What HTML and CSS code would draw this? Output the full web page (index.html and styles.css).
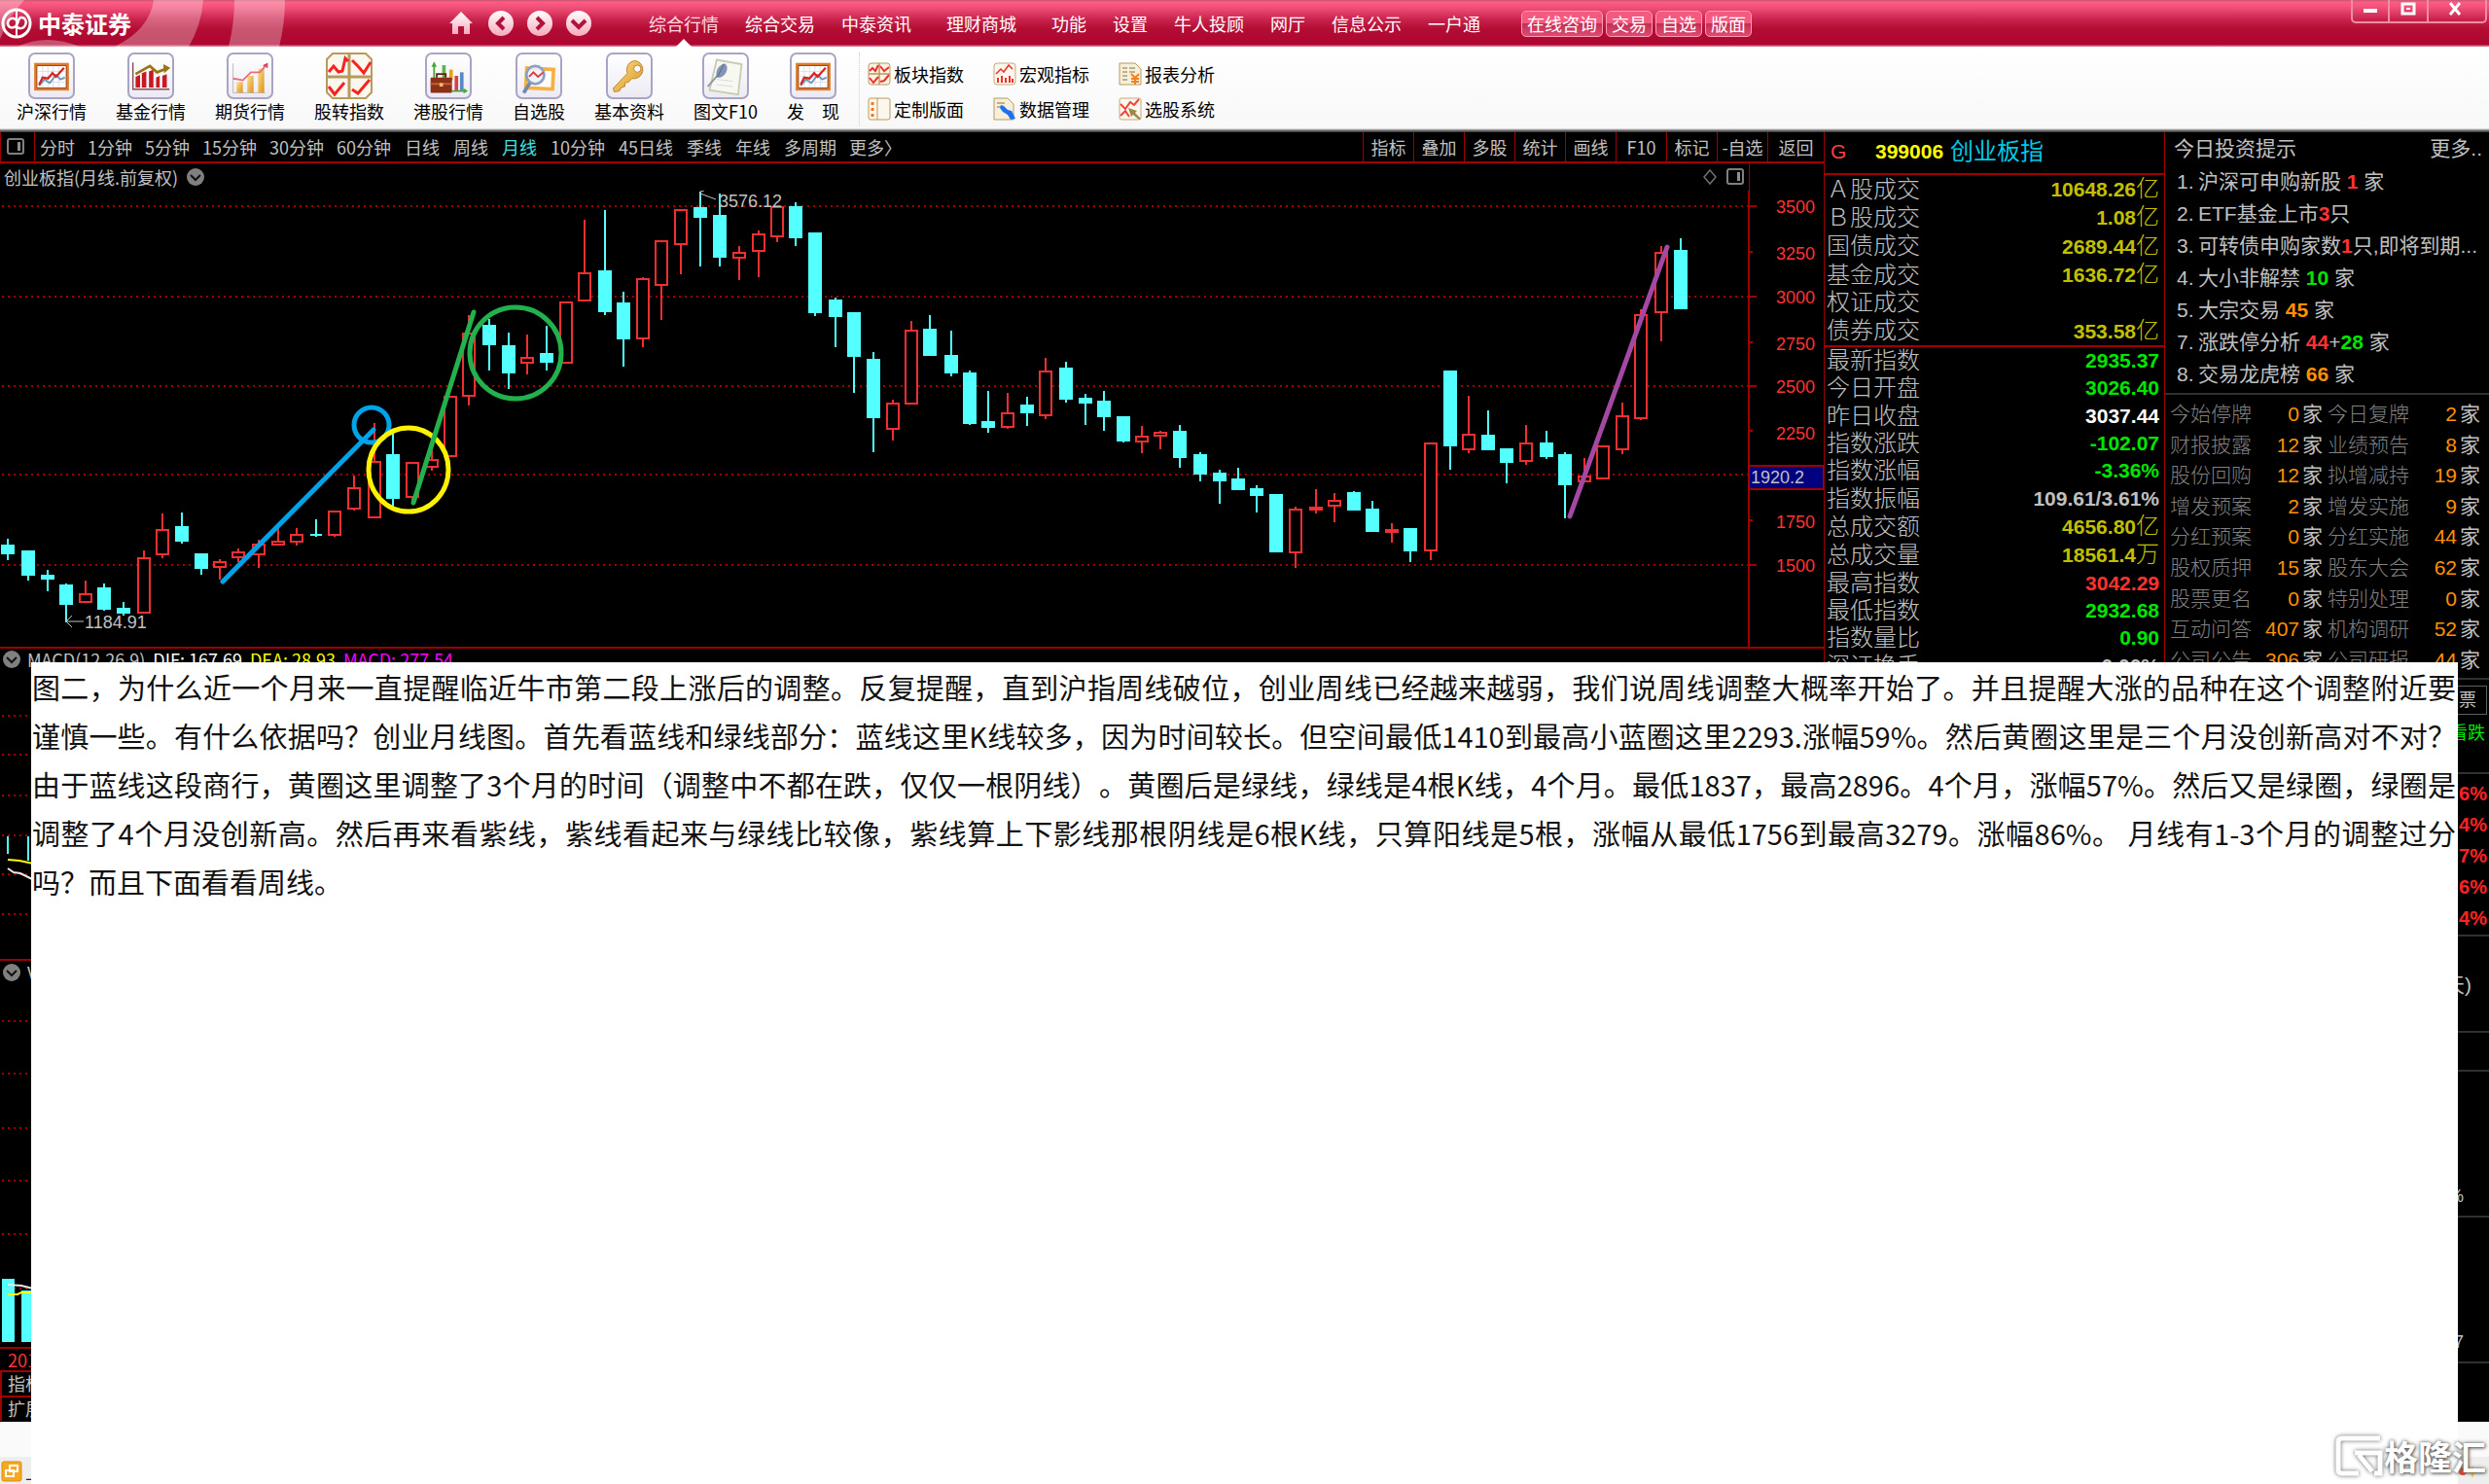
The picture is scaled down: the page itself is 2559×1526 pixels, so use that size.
FILE: index.html
```html
<!DOCTYPE html>
<html lang="zh-CN">
<head>
<meta charset="utf-8">
<title>中泰证券</title>
<link rel="stylesheet" href="styles.css">
</head>
<body>
<svg class="defs" width="0" height="0" aria-hidden="true">
  <defs>
    <linearGradient id="gold" x1="0" y1="0" x2="1" y2="1"><stop offset="0" stop-color="#ffe08a"/><stop offset="1" stop-color="#d9921c"/></linearGradient>
    <linearGradient id="pink" x1="0" y1="0" x2="0" y2="1"><stop offset="0" stop-color="#fff"/><stop offset="1" stop-color="#f8a9bd"/></linearGradient>
    <symbol id="i-board" viewBox="0 0 48 48">
      <rect x="6" y="11" width="36" height="28" fill="#fff" stroke="#e07b28" stroke-width="3"/>
      <path d="M7.500 12.500h33v25h-33z" fill="none" stroke="#8a3a12" stroke-width="1"/>
      <path d="M14 13v24M20 13v24M26 13v24M32 13v24M9 19h30M9 25h30M9 31h30" stroke="#dcdce6"/>
      <path d="M10 35l6-7 6 4 7-9 5 5 5-2" fill="none" stroke="#6d98b5" stroke-width="2"/>
      <path d="M10 34l4-8 6 1 5-6 4 4 9-10" fill="none" stroke="#d82424" stroke-width="2.500"/>
    </symbol>
    <symbol id="i-fund" viewBox="0 0 48 48">
      <path d="M4 9v30h41" fill="none" stroke="#8a4a50" stroke-width="1.500"/>
      <path d="M7 37V25l5-2v14zM14 37V21l5-2v18zM22 37V19l5-2v20zM30 37V26l4-2v13zM37 37V24l5-2v15z" fill="#c9181f"/>
      <path d="M7 22l16-9 8 7 10-4" fill="none" stroke="#9a7412" stroke-width="3"/><path d="M38 11l8 4-7 6z" fill="#9a7412"/>
    </symbol>
    <symbol id="i-futures" viewBox="0 0 48 48">
      <path d="M5 10v33h36" fill="none" stroke="#b7b7c4"/>
      <rect x="9" y="31" width="7" height="12" fill="url(#gold)"/><rect x="21" y="24" width="7" height="19" fill="url(#gold)"/><rect x="33" y="16" width="7" height="27" fill="url(#gold)"/>
      <path d="M5 27l6 1 5 1 9-9 10 0 7-8" fill="none" stroke="#ec6b7b" stroke-width="2"/><path d="M39 13l4-2 0 4" fill="none" stroke="#dc4256" stroke-width="2"/>
    </symbol>
    <symbol id="i-quad" viewBox="0 0 48 48">
      <path d="M7 1h34l6 6v34l-6 6H7l-6-6V7z" fill="#fbf7ec" stroke="#b79a5e" stroke-width="2"/>
      <path d="M24 1v46M1 25h46" stroke="#b79a5e" stroke-width="3"/>
      <path d="M3 20l5-6 5 6 4-1 3-13 3 3M27 8l6 6 6 7 7-11M3 35l6 8 10-12M27 38l6 4 12-14" fill="none" stroke="#f52222" stroke-width="3"/>
    </symbol>
    <symbol id="i-hk" viewBox="0 0 48 48">
      <path d="M8 28V10" stroke="#48a838" stroke-width="2"/><path d="M8 8l3 6H5z" fill="#48a838"/>
      <rect x="17" y="12" width="4" height="16" fill="#58b848"/><rect x="25" y="17" width="4" height="12" fill="#e8a018"/>
      <rect x="31" y="24" width="4" height="17" fill="#d84048"/><rect x="37" y="20" width="4" height="21" fill="#5888c8"/>
      <path d="M28 41h14" stroke="#48a838" stroke-width="2"/><path d="M46 41l-5-3v6z" fill="#48a838"/>
      <rect x="4" y="26" width="24" height="17" rx="1" fill="#8c3018"/><path d="M11 26v-4h10v4" fill="none" stroke="#6a2010" stroke-width="2"/><path d="M4 33h24" stroke="#c0603a" stroke-width="2"/><rect x="14" y="32" width="4" height="4" fill="#f0c060"/>
    </symbol>
    <symbol id="i-pick" viewBox="0 0 48 48">
      <rect x="8" y="14" width="34" height="26" fill="#f5b040" transform="rotate(3 24 26)"/><rect x="12" y="18" width="26" height="18" fill="#fff" transform="rotate(3 24 26)"/>
      <circle cx="20" cy="23" r="10" fill="#eef3fb" fill-opacity=".9" stroke="#8aa0c4" stroke-width="3"/>
      <path d="M13 25l5-5 5 5 6-5" fill="none" stroke="#e03838" stroke-width="2"/><path d="M14 32l-7 11" stroke="#7088b0" stroke-width="4"/>
    </symbol>
    <symbol id="i-key" viewBox="0 0 48 48">
      <path fill-rule="evenodd" d="M31 7a10 10 0 0 0-9 14L6 38l1 4 6-1 2-4 4-1 0-4 4-1 4-4A10 10 0 1 0 31 7zm2 5a4 4 0 1 1 0 8 4 4 0 0 1 0-8z" fill="url(#gold)" stroke="#b98224"/>
    </symbol>
    <symbol id="i-note" viewBox="0 0 48 48">
      <path d="M14 6l28 5-4 34-32-5z" fill="#f7f8f0" stroke="#c8ccb4" stroke-width="2"/><path d="M14 28l18 2M14 34l18 2" stroke="#d8d8e0"/>
      <path d="M4 36L18 20" stroke="#8a94a4" stroke-width="2"/><path d="M14 26c-2-8 2-14 9-16 5 3 3 13-5 16z" fill="#8494b4"/><path d="M15 25l7-14" stroke="#526080"/>
    </symbol>
    <symbol id="s-quad" viewBox="0 0 24 24"><rect x="1" y="1" width="22" height="22" rx="3" fill="#f9f3e3" stroke="#b79a5e"/><path d="M12 1v22M1 12h22" stroke="#b79a5e" stroke-width="1.500"/><path d="M2 9l3-3 3 3 3-6M13 4l4 5 5-4M2 16l4 5 5-6M13 20l4-1 5-6" fill="none" stroke="#f03030" stroke-width="2"/></symbol>
    <symbol id="s-macro" viewBox="0 0 24 24"><rect x="1" y="1" width="22" height="22" rx="3" fill="#f9f6ec" stroke="#c4ab7c"/><path d="M3 12l5-5 3 3 5-7 4 4" fill="none" stroke="#f03030" stroke-width="1.500"/><path d="M5 21v-5M9 21v-7M13 21v-5M17 21v-7M20 21v-4" stroke="#f03030" stroke-width="2"/></symbol>
    <symbol id="s-report" viewBox="0 0 24 24"><path d="M1 1h16l6 6v16H1z" fill="#f6efdc" stroke="#b79a5e"/><path d="M4 6h5M4 10h5M4 14h5M4 18h5M11 6h6M11 10h6" stroke="#b09a6c" stroke-width="1.500"/><path d="M13 12l4 4 4-4M17 16v7M13 17h8M13 20h8" fill="none" stroke="#f08020" stroke-width="2"/></symbol>
    <symbol id="s-layout" viewBox="0 0 24 24"><rect x="1" y="1" width="22" height="22" rx="2" fill="#fbf7ec" stroke="#b79a5e"/><path d="M10 1v22" stroke="#b79a5e"/><path d="M5 5v3M5 11v3M5 17v3" stroke="#f07820" stroke-width="3"/></symbol>
    <symbol id="s-data" viewBox="0 0 24 24"><path d="M1 1h14l6 6v16H1z" fill="#f6efdc" stroke="#b79a5e"/><path d="M4 6h8M4 10h6" stroke="#b09a6c" stroke-width="1.500"/><path d="M8 8l3 1 4 4 4 1 4 8-5 1-3-5-5-3-3-4z" fill="#1a72f0"/></symbol>
    <symbol id="s-select" viewBox="0 0 24 24"><rect x="1" y="1" width="22" height="22" rx="2" fill="#fbf7ec" stroke="#c4ab7c"/><path d="M2 7l5 5 5-7 4 3 5-6M2 19l5-5 4 6" fill="none" stroke="#f04040" stroke-width="2"/><path d="M10 11l9 3-2 2 6 6-2 1-6-5-2 2z" fill="#a08848"/></symbol>
    <symbol id="i-fold" viewBox="0 0 20 20"><circle cx="10" cy="10" r="9" fill="#808080"/><path d="M5 8l5 5 5-5" fill="none" stroke="#111" stroke-width="2"/></symbol>
    <symbol id="i-panel" viewBox="0 0 20 20"><rect x="2" y="2" width="16" height="15" rx="2" fill="none" stroke="#808080" stroke-width="2"/><path d="M12 5h3v9h-3z" fill="#909090"/></symbol>
  </defs>
</svg>

<header class="titlebar">
  <svg class="swoosh" viewBox="0 0 300 48" aria-hidden="true"><g fill="#fff" fill-opacity=".3"><path d="M0 0H25Q8 18 2 36L0 40z"/><path d="M158 0h51q-2 26-15 48h-76q36-18 40-48z"/><path d="M241 0h52q0 24-6 48h-52q6-24 6-48z"/><path d="M18 48q30-14 64 0z"/></g></svg>
  <div class="brand">
    <svg width="32" height="32" viewBox="0 0 32 32" aria-hidden="true"><g fill="none" stroke="#fff"><circle cx="16" cy="16" r="14" stroke-width="3"/><path d="M16 3v26" stroke-width="2"/><path d="M16 13c-3-4-9-2-9 3s6 6 9 2 1-8 5-8 6 4 4 8-7 4-9 1" stroke-width="2.500"/></g></svg>
    <span class="brand-name">中泰证券</span>
  </div>
  <div class="quick">
    <button aria-label="首页"><svg width="26" height="26" viewBox="0 0 26 26"><path d="M13 1l12 12h-3v11h-6v-8h-6v8H4V13H1z" fill="url(#pink)"/></svg></button>
    <button aria-label="后退"><svg width="28" height="28" viewBox="0 0 28 28"><circle cx="14" cy="14" r="13" fill="url(#pink)"/><path d="M17 8l-6 6 6 6" fill="none" stroke="#b0123c" stroke-width="4"/></svg></button>
    <button aria-label="前进"><svg width="28" height="28" viewBox="0 0 28 28"><circle cx="14" cy="14" r="13" fill="url(#pink)"/><path d="M11 8l6 6-6 6" fill="none" stroke="#b0123c" stroke-width="4"/></svg></button>
    <button aria-label="展开"><svg width="28" height="28" viewBox="0 0 28 28"><circle cx="14" cy="14" r="13" fill="url(#pink)"/><path d="M7 11l7 7 7-7" fill="none" stroke="#b0123c" stroke-width="4"/></svg></button>
  </div>
  <nav class="menu">
    <a class="active" href="#">综合行情</a><a href="#">综合交易</a><a href="#">中泰资讯</a><a class="wide" href="#">理财商城</a><a href="#">功能</a><a href="#">设置</a><a href="#">牛人投顾</a><a href="#">网厅</a><a href="#">信息公示</a><a href="#">一户通</a>
  </nav>
  <div class="pills"><button>在线咨询</button><button>交易</button><button>自选</button><button>版面</button></div>
  <div class="window">
    <button aria-label="最小化"><svg width="16" height="16" viewBox="0 0 16 16"><path d="M1 8h14v4H1z" fill="#fff"/></svg></button>
    <button aria-label="还原"><svg width="16" height="16" viewBox="0 0 16 16"><path d="M2 3h12v10H2z" fill="none" stroke="#fff" stroke-width="3"/><path d="M6 7h4v2H6z" fill="#fff"/></svg></button>
    <button class="close" aria-label="关闭"><svg width="16" height="16" viewBox="0 0 16 16"><path d="M3 2l10 12M13 2L3 14" stroke="#fff" stroke-width="3"/></svg></button>
  </div>
</header>

<div class="toolbar">
  <div class="tools">
    <button><svg class="framed"><use href="#i-board"/></svg>沪深行情</button>
    <button><svg class="framed"><use href="#i-fund"/></svg>基金行情</button>
    <button><svg class="framed"><use href="#i-futures"/></svg>期货行情</button>
    <button><svg class="plain"><use href="#i-quad"/></svg>股转指数</button>
    <button><svg class="framed"><use href="#i-hk"/></svg>港股行情</button>
    <button><svg class="framed"><use href="#i-pick"/></svg>自选股</button>
    <button><svg class="framed"><use href="#i-key"/></svg>基本资料</button>
    <button><svg class="framed"><use href="#i-note"/></svg>图文F10</button>
    <button><svg class="framed"><use href="#i-board"/></svg>发　现</button>
  </div>
  <div class="small-tools">
    <button><svg><use href="#s-quad"/></svg>板块指数</button>
    <button><svg><use href="#s-macro"/></svg>宏观指标</button>
    <button><svg><use href="#s-report"/></svg>报表分析</button>
    <button><svg><use href="#s-layout"/></svg>定制版面</button>
    <button><svg><use href="#s-data"/></svg>数据管理</button>
    <button><svg><use href="#s-select"/></svg>选股系统</button>
  </div>
</div>

<main class="workspace">
  <section class="charts">
    <div class="period-bar">
      <button class="dock" aria-label="侧栏"><svg width="20" height="20"><use href="#i-panel"/></svg></button>
      <div class="periods">
        <button>分时</button><button class="minute">1分钟</button><button class="minute">5分钟</button><button class="minute">15分钟</button><button class="minute">30分钟</button><button class="minute">60分钟</button><button>日线</button><button>周线</button><button class="active">月线</button><button>10分钟</button><button>45日线</button><button>季线</button><button>年线</button><button>多周期</button><button class="minute">更多〉</button>
      </div>
      <div class="actions"><button>指标</button><button>叠加</button><button>多股</button><button>统计</button><button>画线</button><button>F10</button><button>标记</button><button>-自选</button><button>返回</button></div>
    </div>
    <div class="chart-head">
      <div class="chart-title">
        <span>创业板指(月线.前复权)</span>
        <svg width="20" height="20"><use href="#i-fold"/></svg>
        <svg class="push" width="16" height="20" viewBox="0 0 16 20"><path d="M8 3l6 7-6 7-6-7z" fill="none" stroke="#707070" stroke-width="1.500"/></svg>
        <svg width="20" height="20"><use href="#i-panel"/></svg>
      </div>
    </div>
    <svg class="kline" viewBox="0 196 1875 469" role="img" aria-label="创业板指月线">
      <g class="grid"><path d="M2 212H1798M2 305H1798M2 397H1798M2 488H1798M2 581H1798"/></g>
      <g id="candles"></g>
      <g class="axis">
        <path d="M1798 196V665M1798 212h8M1798 259h4M1798 305h8M1798 352h4M1798 397h8M1798 443h4M1798 488h8M1798 535h4M1798 581h8"/>
        <rect x="1798" y="479" width="77" height="24"/>
      </g>
      <g class="scale"><text x="1866" y="219">3500</text><text x="1866" y="267">3250</text><text x="1866" y="312">3000</text><text x="1866" y="360">2750</text><text x="1866" y="404">2500</text><text x="1866" y="452">2250</text><text x="1866" y="543">1750</text><text x="1866" y="588">1500</text></g>
      <text class="cursor" x="1800" y="497">1920.2</text>
      <g class="peak"><path d="M720 206v-9l4-1M720 199l16 6M68 639h18M74 633l-6 6 6 6"/><text x="739" y="213">3576.12</text><text x="87" y="646">1184.91</text></g>
      <g class="marks">
        <path d="M229 598L384 442" stroke="#00a2e8"/><circle cx="382" cy="437" r="18" stroke="#00a2e8"/>
        <ellipse cx="420" cy="483" rx="41" ry="43" stroke="#fff200"/>
        <path d="M425 517L487 321" stroke="#22b14c"/><ellipse cx="530" cy="363" rx="47" ry="47" stroke="#22b14c"/>
        <path d="M1614 531L1714 254" stroke="#a349a4"/>
      </g>
    </svg>
    <div class="macd-head"><svg width="20" height="20"><use href="#i-fold"/></svg><span>MACD(12,26,9)</span><span class="dif">DIF: 167.69</span><span class="dea">DEA: 28.93</span><span class="macd">MACD: 277.54</span></div>
    <svg class="sub" width="100%" height="294" aria-hidden="true">
      <g class="grid"><path d="M2 44h1800M2 84h1800M2 126h1800M2 167h1800M2 207h1800M2 248h1800"/></g>
      <path d="M8 168v18M29 168v25" stroke="#54ffff" stroke-width="2"/><path d="M8 192l12 1 14 3" stroke="#ffff00" stroke-width="2" fill="none"/><path d="M8 201l6 4 7 1 12 6" stroke="#e8e8e8" stroke-width="2" fill="none"/>
    </svg>
    <div class="volume-head"><svg width="20" height="20"><use href="#i-fold"/></svg><span>V</span></div>
    <svg class="sub" width="100%" height="369" aria-hidden="true">
      <g class="grid"><path d="M2 34h1800M2 88h1800M2 144h1800M2 198h1800M2 253h1800M2 309h1800"/></g>
      <path d="M2 299h13v65H2zM22 311h14v53H22z" fill="#54ffff"/><path d="M8 305l14 1 12 3" stroke="#e8e8e8" stroke-width="2" fill="none"/><path d="M8 315h10l4-2h12" stroke="#ffff00" stroke-width="2" fill="none"/>
    </svg>
    <div class="dates">201</div>
    <div class="foot-tab">指标</div>
    <div class="foot-tab">扩展</div>
  </section>

  <section class="quote">
    <h2><span class="flag">G</span><span class="code">399006</span><span class="name">创业板指</span></h2>
    <table class="turnover">
      <tr><th>Ａ股成交</th><td class="y">10648.26<i>亿</i></td></tr>
      <tr><th>Ｂ股成交</th><td class="y">1.08<i>亿</i></td></tr>
      <tr><th>国债成交</th><td class="y">2689.44<i>亿</i></td></tr>
      <tr><th>基金成交</th><td class="y">1636.72<i>亿</i></td></tr>
      <tr><th>权证成交</th><td></td></tr>
      <tr><th>债券成交</th><td class="y">353.58<i>亿</i></td></tr>
    </table>
    <table class="figures">
      <tr><th>最新指数</th><td class="g">2935.37</td></tr>
      <tr><th>今日开盘</th><td class="g">3026.40</td></tr>
      <tr><th>昨日收盘</th><td class="w">3037.44</td></tr>
      <tr><th>指数涨跌</th><td class="g">-102.07</td></tr>
      <tr><th>指数涨幅</th><td class="g">-3.36%</td></tr>
      <tr><th>指数振幅</th><td>109.61/3.61%</td></tr>
      <tr><th>总成交额</th><td class="y">4656.80<i>亿</i></td></tr>
      <tr><th>总成交量</th><td class="y">18561.4<i>万</i></td></tr>
      <tr><th>最高指数</th><td class="r">3042.29</td></tr>
      <tr><th>最低指数</th><td class="g">2932.68</td></tr>
      <tr><th>指数量比</th><td class="g">0.90</td></tr>
      <tr><th>深证换手</th><td>0.00%</td></tr>
    </table>
  </section>

  <aside class="tips">
    <div class="tips-head"><h3>今日投资提示</h3><a href="#">更多..</a></div>
    <ul>
      <li><span>1.</span>沪深可申购新股 <b class="r">1</b> 家</li>
      <li><span>2.</span>ETF基金上市<b class="r">3</b>只</li>
      <li><span>3.</span>可转债申购家数<b class="r">1</b>只,即将到期...</li>
      <li><span>4.</span>大小非解禁 <b class="g">10</b> 家</li>
      <li><span>5.</span>大宗交易 <b class="o">45</b> 家</li>
      <li><span>7.</span>涨跌停分析 <b class="r">44</b>+<b class="g">28</b> 家</li>
      <li><span>8.</span>交易龙虎榜 <b class="o">66</b> 家</li>
    </ul>
    <table class="events">
      <tr><th>今始停牌</th><td>0<i>家</i></td><th>今日复牌</th><td>2<i>家</i></td></tr>
      <tr><th>财报披露</th><td>12<i>家</i></td><th>业绩预告</th><td>8<i>家</i></td></tr>
      <tr><th>股份回购</th><td>12<i>家</i></td><th>拟增减持</th><td>19<i>家</i></td></tr>
      <tr><th>增发预案</th><td>2<i>家</i></td><th>增发实施</th><td>9<i>家</i></td></tr>
      <tr><th>分红预案</th><td>0<i>家</i></td><th>分红实施</th><td>44<i>家</i></td></tr>
      <tr><th>股权质押</th><td>15<i>家</i></td><th>股东大会</th><td>62<i>家</i></td></tr>
      <tr><th>股票更名</th><td>0<i>家</i></td><th>特别处理</th><td>0<i>家</i></td></tr>
      <tr><th>互动问答</th><td>407<i>家</i></td><th>机构调研</th><td>52<i>家</i></td></tr>
      <tr><th>公司公告</th><td>306<i>家</i></td><th>公司研报</th><td>44<i>家</i></td></tr>
    </table>
    <div class="vote"><span class="vote-box">票</span><span class="vote-side g">看跌</span></div>
    <div class="gains"><b>6%</b><b>4%</b><b>7%</b><b>6%</b><b>4%</b></div>
    <div class="blk days">天)</div>
    <div class="blk gap"></div>
    <div class="blk rate">%</div>
    <div class="blk seven">7</div>
  </aside>
</main>

<footer class="status">
  <div class="status-row">
    <svg width="22" height="22" viewBox="0 0 22 22" aria-hidden="true"><rect x="1" y="1" width="20" height="20" rx="2" fill="#f7a823" stroke="#e08a10"/><path d="M9 5h8v6H9zM5 10h8v6H5z" fill="#f7a823" stroke="#fff" stroke-width="2"/></svg>
    <span>上证</span>
    <svg class="push" width="32" height="24" viewBox="0 0 32 24" aria-hidden="true"><circle cx="5" cy="12" r="4" fill="#e84020"/><path d="M15 6l2 5 5 1-5 2-2 5-2-5-5-2 5-1z" fill="#f8c820"/></svg>
  </div>
</footer>

<article class="note"><p>图二，为什么近一个月来一直提醒临近牛市第二段上涨后的调整。反复提醒，直到沪指周线破位，创业周线已经越来越弱，我们说周线调整大概率开始了。并且提醒大涨的品种在这个调整附近要谨慎一些。有什么依据吗？创业月线图。首先看蓝线和绿线部分：蓝线这里K线较多，因为时间较长。但空间最低1410到最高小蓝圈这里2293.涨幅59%。然后黄圈这里是三个月没创新高对不对？由于蓝线这段商行，黄圈这里调整了3个月的时间（调整中不都在跌，仅仅一根阴线）。黄圈后是绿线，绿线是4根K线，4个月。最低1837，最高2896。4个月，涨幅57%。然后又是绿圈，绿圈是调整了4个月没创新高。然后再来看紫线，紫线看起来与绿线比较像，紫线算上下影线那根阴线是6根K线，只算阳线是5根，涨幅从最低1756到最高3279。涨幅86%。 月线有1-3个月的调整过分吗？而且下面看看周线。</p></article>
<div class="watermark">
  <svg width="52" height="46" viewBox="0 0 52 46" aria-hidden="true"><path d="M48 5H9q-4 0-4 4v28q0 4 4 4h17M22 20h26v21h-6M26 22l14 17" fill="none" stroke="#fff" stroke-width="5"/></svg>
  <span>格隆汇</span>
</div>
<script src="chart.js"></script>
</body>
</html>
```
FILE: styles.css
```css
* { box-sizing: border-box; }
html { height: 100%; }
body {
  margin: 0;
  min-height: 100%;
  position: relative;
  display: flex;
  flex-direction: column;
  overflow-x: hidden;
  background: #000;
  color: #c0c0c0;
  font: 18px/24px "Noto Sans CJK SC", "Liberation Sans", sans-serif;
}
button {
  margin: 0; padding: 0; border: 0;
  background: none; color: inherit; font: inherit;
  white-space: nowrap; cursor: pointer;
}
a { color: inherit; text-decoration: none; }
svg { display: block; flex: none; }
i { font-style: normal; }
table { border-collapse: collapse; width: 100%; }
th, td { padding: 0; font-weight: inherit; white-space: nowrap; }
.defs { position: absolute; }
.push { margin-left: auto; }
.r { color: #ff3232; }
.g { color: #00e600; }
.w { color: #fff; }
.y { color: #c0c000; }
.o { color: #ff9000; }

/* title bar */
.titlebar {
  position: relative;
  display: flex;
  align-items: center;
  height: 48px;
  color: #fff;
  background: linear-gradient(#c05870 0, #ff5c84 2px, #f04f78 8px, #c8234c 20px, #b30d34 30px, #ad0630 46px, #d87890 47px);
}
.swoosh { position: absolute; left: 0; top: 0; width: 300px; height: 48px; }
.brand { position: relative; display: flex; align-items: center; gap: 6px; width: 461px; padding-left: 1px; }
.brand-name { font-size: 24px; font-weight: 700; }
.quick { display: flex; align-items: center; gap: 12px; width: 206px; }
.quick button:first-child { margin-right: 2px; }
.menu { display: flex; gap: 27px; height: 47px; line-height: 47px; white-space: nowrap; }
.menu .wide { margin: 0 9px; }
.menu .active { position: relative; color: #ffd9e2; }
.menu .active::after {
  content: "";
  position: absolute; left: 50%; bottom: 0; margin-left: -8px;
  border: 8px solid transparent; border-top: 0; border-bottom-color: #fff;
}
.pills { display: flex; gap: 3px; margin-left: 42px; }
.pills button {
  height: 27px; padding: 0 5px;
  border: 1px solid #ff9cb4; border-radius: 5px;
  background: linear-gradient(#f4597f 50%, #c22f55 50%, #e04a72);
}
.window { display: flex; align-self: flex-start; margin: 0 2px 0 auto; border: 2px solid #f08ca4; border-top: 0; border-radius: 0 0 5px 5px; }
.window button { display: flex; align-items: center; justify-content: center; width: 36px; height: 22px; padding-bottom: 4px; }
.window button + button { width: 40px; border-left: 2px solid #f08ca4; }
.window button.close { width: 60px; padding-right: 4px; }

/* tool bar */
.toolbar {
  display: flex;
  height: 88px;
  padding: 6px 0 0 17px;
  color: #000;
  background: linear-gradient(#fff, #f8f8f8 84px, #777 86px, #333);
}
.tools { display: flex; gap: 30px; padding-right: 20px; border-right: 1px dotted #ccd; height: 76px; }
.tools button { display: flex; flex-direction: column; align-items: center; justify-content: flex-start; }
.tools svg { width: 48px; height: 48px; }
.framed { border: 2px solid #aaa4c4; border-radius: 7px; background: linear-gradient(#fff, #ecebf4); }
.small-tools { display: grid; grid-template-columns: repeat(3, 99px); grid-auto-rows: 24px; column-gap: 30px; row-gap: 12px; margin: 10px 0 0 8px; }
.small-tools button { display: flex; align-items: center; gap: 3px; }
.small-tools svg { width: 24px; height: 24px; }

/* three-column workspace */
.workspace { flex: 1; display: grid; grid-template-columns: minmax(0, 1fr) 351px 333px; }
.charts { min-width: 0; }
.period-bar { display: flex; height: 32px; border-bottom: 2px solid #a00000; line-height: 30px; }
.dock { display: flex; align-items: center; width: 36px; padding-left: 5px; border: 1px solid #a00000; border-width: 0 1px; }
.periods { display: flex; gap: 14px; padding-left: 5px; }
.periods .minute { margin-left: -1px; }
.periods .active { color: #40e0e0; }
.actions { display: flex; width: 474px; margin-left: auto; }
.actions button { flex: 0 0 52px; border-left: 1px solid #a00000; }
.actions button:last-child { flex: 1; }
.chart-head { display: flex; height: 28px; padding-right: 76px; }
.chart-title { flex: 1; display: flex; align-items: center; gap: 8px; padding: 0 4px; border-right: 1px solid #a00000; line-height: 26px; }
.kline { width: 100%; height: auto; }
.grid path { fill: none; stroke: #a00000; stroke-width: 2; stroke-dasharray: 2 4; }
.axis path, .axis rect { fill: none; stroke: #a00000; stroke-width: 2; }
.axis rect { fill: #000080; }
.scale, .cursor, .peak text { font: 18px "Liberation Sans", sans-serif; }
.scale { fill: #ff3232; text-anchor: end; }
.cursor, .peak text { fill: #c0c0c0; }
.peak path { fill: none; stroke: #c0c0c0; stroke-width: 1; }
.marks { fill: none; stroke-width: 5; stroke-linecap: round; }
.up { fill: #000; stroke: #f03030; stroke-width: 2; }
.down { fill: #54ffff; stroke: #54ffff; stroke-width: 2; }
.macd-head, .volume-head { display: flex; align-items: center; gap: 6px; padding: 0 0 4px 2px; height: 27px; border-top: 2px solid #a00000; white-space: nowrap; }
.dif, .dea, .macd { margin-left: 2px; }
.dif { color: #fff; }
.dea { color: #ff0; }
.macd { color: #f0f; }
.volume-head { height: 30px; }
.dates { height: 24px; padding-left: 8px; border-top: 2px solid #a00000; color: #ff3232; line-height: 22px; }
.foot-tab { height: 26px; padding-left: 6px; border: 2px solid #a00000; border-bottom: 0; line-height: 23px; }

/* quote panel */
.quote { border: 1px solid #a00000; border-width: 0 1px; }
.quote h2 { display: flex; align-items: center; margin: 0; height: 44px; padding: 0 0 2px 6px; border-bottom: 2px solid #a00000; font: 21px/40px "Liberation Sans", "Noto Sans CJK SC", sans-serif; }
.flag { width: 46px; color: #ff4040; }
.code { width: 77px; color: #ff0; font-weight: 700; }
.name { color: #00c8e8; font-size: 24px; }
.turnover, .figures { font-family: "Liberation Sans", "Noto Sans CJK SC", sans-serif; line-height: 28px; }
.quote th { padding-left: 2px; text-align: left; font-size: 24px; font-weight: 300; }
.quote td { padding-right: 5px; text-align: right; font-size: 21px; font-weight: 700; }
.quote td i { font-size: 24px; font-weight: 300; }
.turnover { height: 175px; }
.figures { height: 344px; border-top: 2px solid #a00000; }

/* right column */
.tips { font: 21px/32px "Liberation Sans", "Noto Sans CJK SC", sans-serif; overflow: hidden; }
.tips-head { display: flex; justify-content: space-between; padding: 1px 7px 1px 9px; }
.tips h3 { margin: 0; font: inherit; }
.tips ul { margin: 0; padding: 0 0 3px 12px; list-style: none; border-bottom: 2px solid #303030; }
.tips li { height: 33px; line-height: 33px; white-space: nowrap; }
.tips li span { display: inline-block; width: 22px; }
.tips li b { font-weight: 700; }
.events { table-layout: fixed; height: 284px; margin-top: 4px; line-height: 31px; color: #808080; }
.events th { width: 94px; padding-left: 5px; text-align: left; font-weight: 300; }
.events td { width: 68px; color: #ff9000; text-align: right; }
.events td:last-child { width: auto; padding-right: 9px; }
.events td i { color: #c0c0c0; margin-left: 3px; }
.vote { height: 99px; margin-top: 3px; padding: 6px 2px 0 0; border: 2px solid #303030; border-width: 2px 0; text-align: right; }
.vote-box { display: block; height: 30px; padding-right: 10px; border: 1px solid #606060; font-size: 18px; line-height: 28px; }
.vote-side { display: block; height: 38px; padding-right: 2px; font-size: 18px; line-height: 38px; }
.gains { display: flex; flex-direction: column; height: 167px; padding: 4px 2px 0 0; border-bottom: 2px solid #303030; text-align: right; color: #f22; font-size: 20px; }
.blk { padding-right: 18px; border-bottom: 2px solid #303030; text-align: right; line-height: 99px; height: 99px; }
.gap { height: 40px; }
.rate, .seven { height: 150px; line-height: 32px; padding: 112px 26px 0 0; font-size: 18px; }

/* status strip */
.status { height: 64px; padding-top: 38px; background: linear-gradient(#fafafa 36px, #eee 36px); color: #222; }
.status-row { display: flex; align-items: center; gap: 3px; height: 26px; padding-left: 1px; }

/* commentary laid over the terminal */
.note {
  position: absolute; left: 32px; right: 32px; top: 681px; bottom: 0;
  padding: 0 2px 0 1px;
  background: #fff; color: #111;
  font-size: 29px; line-height: 50px;
}
.note p { margin: 0; text-align: justify; text-spacing-trim: space-all; }
.watermark {
  position: absolute; right: 3px; bottom: 6px;
  display: flex; align-items: center;
  color: #fff; font-size: 35px; font-weight: 700; line-height: 46px;
  text-shadow: 0 0 4px #555, 1px 1px 3px #777;
}
.watermark svg { filter: drop-shadow(0 0 2px #666); }
```
FILE: chart.js
```js
// Monthly candles: x centre, high, body top, body bottom, low, direction (1 up, 0 down)
const candles = [
  [8,554,561,569,576,0],[29,566,567,591,597,0],[49,586,592,595,608,0],[68,600,602,621,640,0],
  [88,597,611,619,619,1],[107,600,605,626,628,0],[127,619,626,630,633,0],[148,566,574,630,630,1],
  [167,528,545,570,574,1],[187,527,542,556,559,0],[207,569,570,584,591,0],[226,575,578,583,596,1],
  [245,564,568,573,578,1],[266,555,560,570,584,1],[286,543,557,560,560,1],[305,543,550,557,561,1],
  [325,534,550,550,552,0],[344,526,526,550,552,1],[364,489,502,523,525,1],[385,435,475,532,532,1],
  [404,446,468,512,521,0],[424,476,476,511,516,1],[444,460,473,480,484,1],[463,408,408,469,469,1],
  [482,324,343,407,417,1],[503,328,335,354,381,0],[523,342,356,383,400,0],[542,344,368,373,385,1],
  [562,335,364,372,381,0],[582,311,311,373,373,1],[601,226,281,309,310,1],[622,216,279,320,324,0],
  [641,300,312,348,377,0],[661,285,287,348,357,1],[680,248,248,293,329,1],[700,216,216,251,282,1],
  [720,197,214,223,274,0],[740,199,222,264,274,0],[760,253,260,265,288,1],[780,237,241,258,285,1],
  [799,213,213,243,249,1],[818,208,213,244,253,0],[838,240,240,321,325,0],[859,306,309,325,357,0],
  [878,321,322,366,404,0],[898,362,370,429,465,0],[918,411,415,441,453,1],[937,330,340,415,415,1],
  [956,324,339,365,366,0],[978,340,366,383,387,0],[997,381,384,435,437,0],[1016,402,434,439,445,0],
  [1036,404,425,439,441,1],[1056,408,417,424,438,0],[1075,368,382,427,431,1],[1096,372,379,410,414,0],
  [1116,405,410,414,437,0],[1135,402,413,428,443,0],[1155,429,429,453,455,0],[1174,438,449,454,466,1],
  [1193,443,445,448,462,1],[1213,437,444,470,481,0],[1234,465,468,487,495,0],[1254,483,487,494,518,0],
  [1273,481,493,503,504,0],[1292,499,503,509,527,0],[1312,509,509,567,567,0],[1332,521,524,568,584,1],
  [1353,503,522,524,528,1],[1372,507,515,520,537,1],[1392,505,507,524,524,0],[1411,515,524,546,546,0],
  [1431,538,545,547,558,1],[1450,544,544,566,578,0],[1471,456,456,566,576,1],[1491,382,382,458,483,0],
  [1510,407,447,462,466,1],[1530,422,448,462,462,0],[1549,461,462,475,497,0],[1569,437,456,474,478,1],
  [1590,443,456,469,472,0],[1609,465,468,498,533,0],[1629,471,490,495,495,1],[1648,459,459,492,492,1],
  [1668,414,428,462,467,1],[1687,318,324,430,432,1],[1708,253,260,321,351,1],[1728,245,258,317,318,0]
];
const layer = document.getElementById("candles");
for (const [x, high, top, bottom, low, up] of candles) {
  const path = document.createElementNS("http://www.w3.org/2000/svg", "path");
  path.setAttribute("class", up ? "up" : "down");
  path.setAttribute("d", `M${x} ${high}V${top}M${x - 6} ${top}h12V${bottom}h-12zM${x} ${bottom}V${low}`);
  layer.appendChild(path);
}
```
